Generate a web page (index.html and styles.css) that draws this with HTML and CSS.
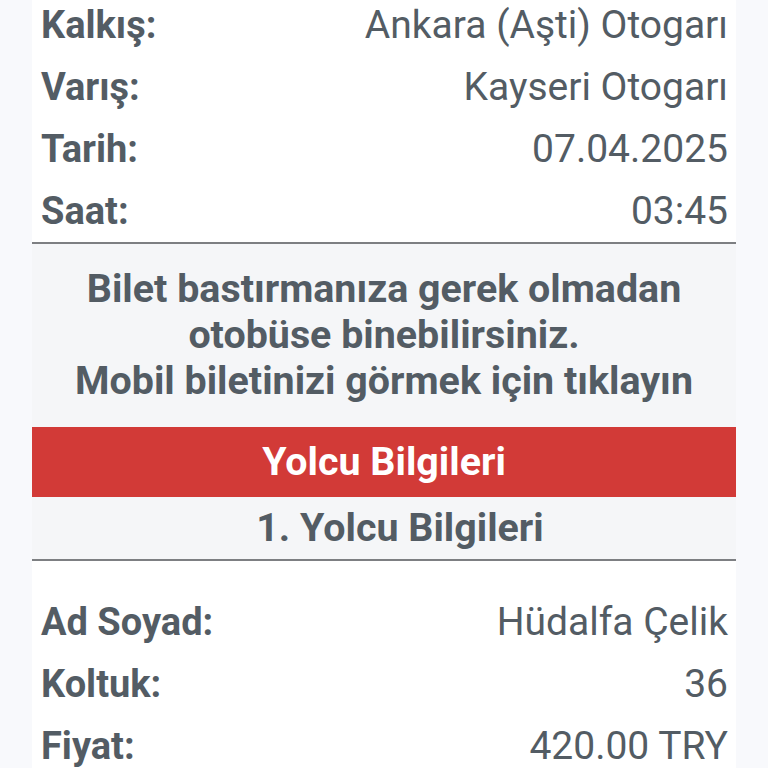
FILE: index.html
```
<!DOCTYPE html>
<html lang="tr">
<head>
  <meta charset="UTF-8" />
  <meta name="viewport" content="width=device-width, initial-scale=1.0"/>
  <title>Bilet Detayı</title>
  <link rel="stylesheet" href="styles.css">
</head>
<body>
  <div class="ticket">
    <div class="info-list trip">
      <div class="info-row"><span class="label">Kalkış:</span><span class="value">Ankara (Aşti) Otogarı</span></div>
      <div class="info-row"><span class="label">Varış:</span><span class="value">Kayseri Otogarı</span></div>
      <div class="info-row"><span class="label">Tarih:</span><span class="value">07.04.2025</span></div>
      <div class="info-row"><span class="label">Saat:</span><span class="value">03:45</span></div>
    </div>

    <a class="mobile-note" href="#">
      Bilet bastırmanıza gerek olmadan<br>
      otobüse binebilirsiniz.<br>
      Mobil biletinizi görmek için tıklayın
    </a>

    <div class="section-title">Yolcu Bilgileri</div>
    <div class="passenger-title">1. Yolcu Bilgileri</div>

    <div class="info-list passenger">
      <div class="info-row"><span class="label">Ad Soyad:</span><span class="value">Hüdalfa Çelik</span></div>
      <div class="info-row"><span class="label">Koltuk:</span><span class="value">36</span></div>
      <div class="info-row"><span class="label">Fiyat:</span><span class="value">420.00 TRY</span></div>
    </div>
  </div>
</body>
</html>
```

FILE: styles.css
```
body {
  margin: 0;
  background-color: #f8f9fc;
  font-family: Roboto, 'Noto Sans', Arial, sans-serif;
  color: #535c64;
}

.ticket {
  width: 704px;
  margin: -6px auto 0;
  background-color: #fff;
}

.info-list {
  padding: 0 8px 0 9px;
}

.info-row {
  display: flex;
  justify-content: space-between;
  font-size: 39px;
  line-height: 62px;
}

.label {
  font-weight: 700;
  font-size: 38px;
}

.value {
  font-weight: 400;
}

.trip {
  border-bottom: 2px solid #7d7f82;
}

.mobile-note {
  display: block;
  background-color: #f5f6f8;
  text-align: center;
  text-decoration: none;
  color: #535c64;
  font-weight: 700;
  font-size: 39.4px;
  line-height: 46px;
  padding: 22px 0 23px;
}

.section-title {
  background-color: #d23a37;
  color: #fff;
  text-align: center;
  font-weight: 700;
  font-size: 39.4px;
  line-height: 70px;
}

.passenger-title {
  background-color: #f5f6f8;
  text-align: center;
  font-weight: 700;
  font-size: 39.4px;
  line-height: 62px;
  padding-left: 32px;
  border-bottom: 2px solid #7d7f82;
}

.passenger {
  padding-top: 30px;
}
```
